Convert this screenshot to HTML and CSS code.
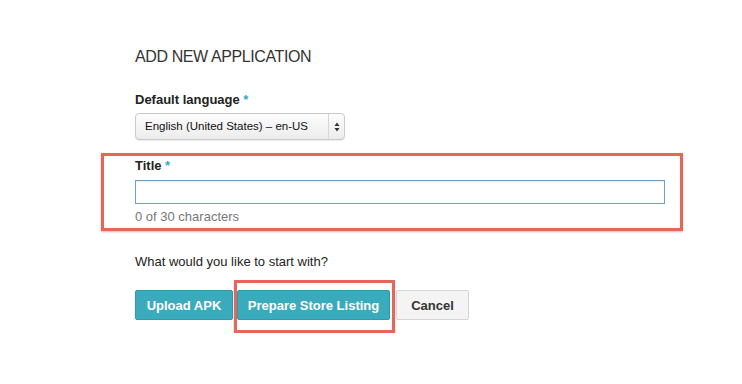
FILE: index.html
```html
<!DOCTYPE html>
<html lang="en">
<head>
    <meta charset="UTF-8">
    <title>Add New Application</title>
    <link rel="stylesheet" href="styles.css">
</head>
<body>
    <div class="page">
        <h1>ADD NEW APPLICATION</h1>

        <label class="field-label">Default language <span class="req">*</span></label>
        <div class="select">
            <span class="select-value">English (United States) – en-US</span>
            <span class="select-arrows">
                <svg width="6" height="10" viewBox="0 0 6 10"><path d="M3 0.5 L5.5 4 H0.5 Z M3 9.5 L5.5 6 H0.5 Z" fill="#333"/></svg>
            </span>
        </div>

        <div class="highlight title-box">
            <label class="field-label">Title <span class="req">*</span></label>
            <input type="text" class="text-input">
            <div class="hint">0 of 30 characters</div>
        </div>

        <p class="question">What would you like to start with?</p>

        <div class="actions">
            <button type="button" class="btn btn-primary btn-upload">Upload APK</button>
            <div class="highlight btn-mark">
                <button type="button" class="btn btn-primary btn-prepare">Prepare Store Listing</button>
            </div>
            <button type="button" class="btn btn-cancel">Cancel</button>
        </div>
    </div>
</body>
</html>
```

FILE: styles.css
```css
* {
    box-sizing: border-box;
}
body {
    margin: 0;
    background: #fff;
    color: #333;
    font-family: "Liberation Sans", Arial, sans-serif;
}
.page {
    padding: 47px 0 0 135px;
}
h1 {
    margin: 0;
    font-size: 16px;
    line-height: 20px;
    font-weight: normal;
    letter-spacing: -0.4px;
    color: #333;
}
.field-label {
    display: block;
    margin-top: 25px;
    margin-bottom: 5px;
    font-size: 13px;
    line-height: 16px;
    font-weight: bold;
    color: #222;
}
.req {
    color: #3ba9bd;
}
.select {
    display: flex;
    width: 210px;
    height: 27px;
    border: 1px solid #c9c9c9;
    border-radius: 4px;
    background: linear-gradient(#fdfdfd, #ececec);
    box-shadow: 0 1px 1px rgba(0,0,0,0.08);
    font-size: 11.5px;
    color: #111;
}
.select-value {
    flex: 1;
    padding-left: 9px;
    line-height: 25px;
}
.select-arrows {
    display: flex;
    align-items: center;
    justify-content: center;
    width: 16px;
    border-left: 1px solid #d6d6d6;
}
.highlight {
    border: 3px solid #e5675a;
    box-shadow: 0 1px 2px rgba(0,0,0,0.25);
}
.title-box {
    width: 582px;
    margin: 13px 0 0 -34px;
    padding: 2px 16px 3px 31px;
}
.title-box .field-label {
    margin-top: 0;
    margin-bottom: 6px;
}
.text-input {
    display: block;
    width: 530px;
    height: 24px;
    margin: 0;
    border: 1px solid #6aa0c9;
    box-shadow: inset 0 1px 1px rgba(0,0,0,0.08);
    outline: none;
}
.hint {
    margin-top: 5px;
    font-size: 13px;
    line-height: 16px;
    color: #777;
}
.question {
    margin: 23px 0 0;
    font-size: 13px;
    line-height: 16px;
    color: #222;
}
.actions {
    display: flex;
    align-items: flex-start;
    margin-top: 20px;
}
.btn {
    display: block;
    height: 30px;
    margin: 0;
    border-radius: 2px;
    font-family: "Liberation Sans", Arial, sans-serif;
    font-size: 13px;
    font-weight: bold;
    cursor: pointer;
}
.btn-primary {
    border: 1px solid #2f9aab;
    background: #3aabbd;
    color: #fff;
}
.btn-upload {
    width: 98px;
}
.btn-prepare {
    width: 153px;
}
.btn-mark {
    flex: none;
    width: 161px;
    height: 53px;
    margin: -10px 0 0 1px;
    padding: 7px 2px 10px 0;
}
.btn-cancel {
    width: 73px;
    margin-left: 1px;
    border: 1px solid #d4d4d4;
    background: #f4f4f4;
    color: #333;
}
```
